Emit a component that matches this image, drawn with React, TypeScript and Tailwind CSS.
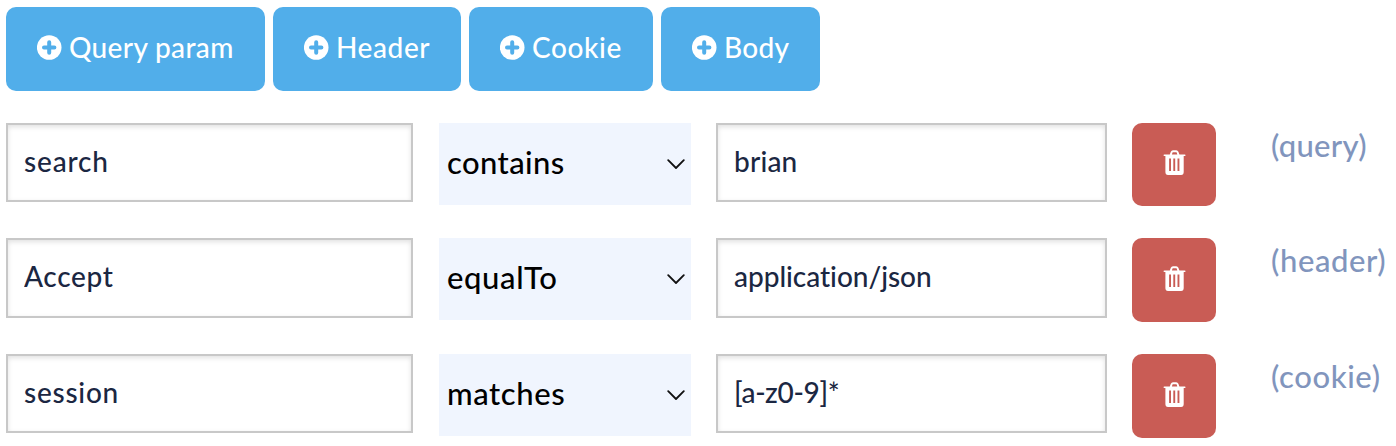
type ParamButton = { label: string; width: string; text: string };

const paramButtons: ParamButton[] = [
  { label: 'Query param', width: 'w-[259px]', text: 'tracking-[0.35px]' },
  { label: 'Header', width: 'w-[188px]', text: 'tracking-[0.6px]' },
  { label: 'Cookie', width: 'w-[184px]', text: 'tracking-[0.6px]' },
  { label: 'Body', width: 'w-[159px]', text: 'tracking-[0.3px]' },
];

const rows = [
  {
    name: 'search', operator: 'contains', value: 'brian', kind: '(query)',
    height: 'h-[115px]', field: 'h-[79px] pb-[3px]', button: 'h-[83px]',
    nameText: 'tracking-[0.85px]', operatorText: 'tracking-[0.4px]', valueText: 'tracking-[0.2px]', kindText: 'tracking-[0.3px]',
  },
  {
    name: 'Accept', operator: 'equalTo', value: 'application/json', kind: '(header)',
    height: 'h-[116px]', field: 'h-[80px] pb-[5px]', button: 'h-[84px]',
    nameText: 'tracking-[0.65px]', operatorText: 'tracking-[0.65px]', valueText: 'tracking-[-0.03px]', kindText: 'tracking-[0.6px]',
  },
  {
    name: 'session', operator: 'matches', value: '[a-z0-9]*', kind: '(cookie)',
    height: 'h-[92px]', field: 'h-[79px] pb-[3px]', button: 'h-[84px]',
    nameText: 'tracking-[0.75px]', operatorText: 'tracking-[0.6px]', valueText: 'tracking-[-0.3px]', kindText: 'tracking-[0.6px]',
  },
];

function PlusCircle() {
  return (
    <svg className="size-[25px] shrink-0" viewBox="0 0 25 25" fill="none">
      <circle cx="12.2" cy="12.5" r="12.3" fill="#fff" />
      <path d="M12.2 7.300v10.400M7 12.500h10.400" stroke="#51aeea" strokeWidth="4" strokeLinecap="round" />
    </svg>
  );
}

function Trash() {
  return (
    <svg className="h-[25px] w-[23px]" viewBox="0 0 23 25">
      <path
        fill="#fff"
        fillRule="evenodd"
        d="M6.800 4.400 7.800 1.800Q8.400.2 10 .2h3.200q1.600 0 2.200 1.600l1 2.600h5.300q.9 0 .9.800t-.9.800h-1V22q0 2.900-2.600 2.900H5Q2.400 24.900 2.400 22V6H1.400Q.5 6 .5 5.200t.9-.8ZM8.900 4.400h5.400l-.6-1.900q-.1-.3-.5-.3h-3.200q-.4 0-.5.3ZM6.100 8.600v12.500h1.900V8.600ZM10.300 8.600v12.500h1.900V8.600ZM14.500 8.600v12.500h1.900V8.600Z"
      />
    </svg>
  );
}

const fieldClass =
  'border-2 border-[#c8c8c8] bg-white px-4 text-[28px] text-[#1b2742] outline-none shadow-[inset_0_2px_5px_rgba(0,0,0,0.12)] [font-variant-ligatures:none]';

export default function App() {
  return (
    <main className="h-[446px] w-[1396px] overflow-hidden bg-white pt-[7px] pl-[6px] font-['Lato',sans-serif] font-medium">
      <div className="flex h-[84px] gap-2">
        {paramButtons.map((b) => (
          <button
            key={b.label}
            className={`flex items-center gap-[7px] rounded-[10px] bg-[#51aeea] pb-[3px] pl-[31px] text-[28px] whitespace-nowrap text-white ${b.width}`}
          >
            <PlusCircle />
            <span className={`pb-[2px] ${b.text}`}>{b.label}</span>
          </button>
        ))}
      </div>
      <div className="mt-8">
        {rows.map((r) => (
          <div key={r.name} className={`flex items-start ${r.height}`}>
            <input className={`w-[407px] ${fieldClass} ${r.field} ${r.nameText}`} defaultValue={r.name} />
            <button className="ml-[26px] flex h-[82px] w-[252px] items-center justify-between bg-[#f0f5fe] pr-[6px] pl-2 text-[31px] text-black">
              <span className={`pb-1 ${r.operatorText}`}>{r.operator}</span>
              <svg className="h-[12px] w-[18px]" viewBox="0 0 18 12" fill="none" stroke="#111" strokeWidth="1.8">
                <path d="m1.200 2.200 7.800 7.800 7.800-7.800" strokeLinecap="round" strokeLinejoin="round" />
              </svg>
            </button>
            <input className={`ml-[25px] w-[391px] ${fieldClass} ${r.field} ${r.valueText}`} defaultValue={r.value} />
            <button className={`ml-[25px] flex w-[84px] items-center justify-center rounded-[10px] bg-[#c95c55] pb-[4px] ${r.button}`}>
              <Trash />
            </button>
            <span className={`ml-[55px] text-[31px] leading-[44px] whitespace-nowrap text-[#8195bd] ${r.kindText}`}>
              {r.kind}
            </span>
          </div>
        ))}
      </div>
    </main>
  );
}
